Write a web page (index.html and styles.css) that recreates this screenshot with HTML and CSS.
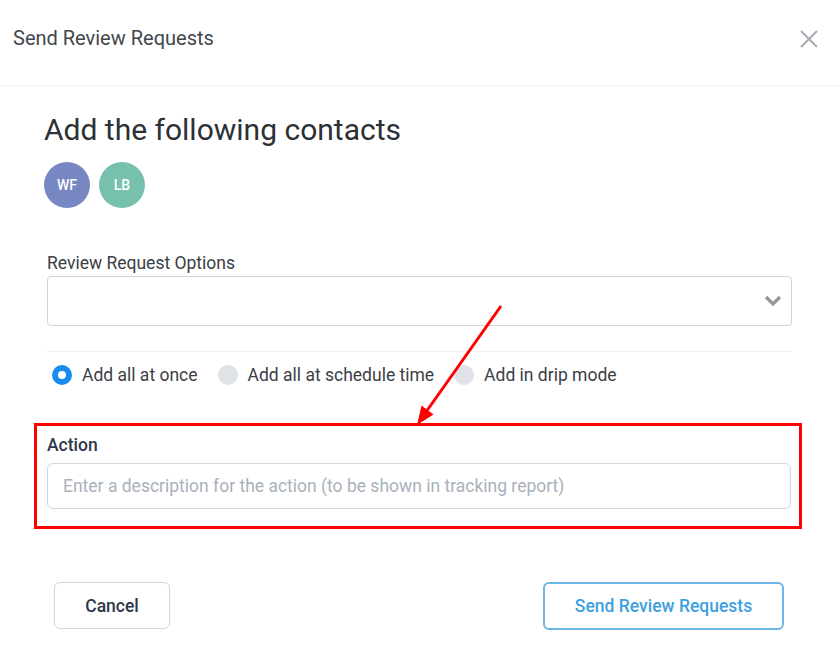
FILE: index.html
```html
<!DOCTYPE html>
<html lang="en">
  <head>
    <meta charset="UTF-8" />
    <meta name="viewport" content="width=device-width, initial-scale=1.0" />
    <title>Send Review Requests</title>
    <link rel="stylesheet" href="styles.css">
  </head>
  <body>
    <div class="modal">
      <div class="header">
        <p class="headerTitle">Send Review Requests</p>
        <button type="button" class="close" aria-label="Close">
          <svg width="18" height="18" viewBox="0 0 18 18">
            <path d="M1 1 L17 17 M17 1 L1 17" stroke="#a7adb2" stroke-width="2" fill="none" />
          </svg>
        </button>
      </div>
      <div class="content">
        <h1 class="heading">Add the following contacts</h1>
        <div class="avatars">
          <div class="avatar wf">WF</div>
          <div class="avatar lb">LB</div>
        </div>
        <label class="fieldLabel">Review Request Options</label>
        <div class="select">
          <svg class="chevron" width="18" height="12" viewBox="0 0 18 12">
            <path d="M2 2 L9 9 L16 2" stroke="#979797" stroke-width="3.2" fill="none" />
          </svg>
        </div>
        <div class="divider"></div>
        <div class="radios">
          <div class="radio"><span class="dot checked"></span>Add all at once</div>
          <div class="radio"><span class="dot"></span>Add all at schedule time</div>
          <div class="radio"><span class="dot"></span>Add in drip mode</div>
        </div>
        <div class="highlight">
          <label class="actionLabel">Action</label>
          <input class="actionInput" type="text" placeholder="Enter a description for the action (to be shown in tracking report)" />
        </div>
        <div class="footer">
          <button type="button" class="cancel">Cancel</button>
          <button type="button" class="send">Send Review Requests</button>
        </div>
      </div>
      <svg class="arrow" width="839" height="671" viewBox="0 0 839 671">
        <line x1="501" y1="306" x2="426" y2="412" stroke="#ff0000" stroke-width="3" />
        <polygon points="417,425 433.5,414.5 421.5,405.5" fill="#ff0000" />
      </svg>
    </div>
  </body>
</html>
```

FILE: styles.css
```css
body {
  margin: 0;
  font-family: Roboto, "Liberation Sans", sans-serif;
  color: #3a4046;
  background: #fff;
}
.modal {
  position: relative;
  width: 839px;
  height: 671px;
}
.header {
  height: 85px;
  border-bottom: 1px solid #eef3f7;
  display: flex;
  justify-content: space-between;
  align-items: flex-start;
  padding: 0 21px 0 13px;
}
.headerTitle {
  margin: 26px 0 0;
  font-size: 20px;
  line-height: 24px;
  color: #41474d;
}
.close {
  border: none;
  background: none;
  padding: 0;
  margin-top: 30px;
  cursor: pointer;
}
.content {
  padding: 0 47px;
}
.heading {
  margin: 27px 0 0 -3px;
  font-size: 30px;
  font-weight: 400;
  line-height: 34px;
  color: #2b3136;
}
.avatars {
  display: flex;
  gap: 9px;
  margin: 15px 0 0 -3px;
}
.avatar {
  width: 46px;
  height: 46px;
  border-radius: 50%;
  display: flex;
  justify-content: center;
  align-items: center;
  color: #fff;
  font-size: 14px;
  font-weight: 500;
}
.wf {
  background: #7787c1;
}
.lb {
  background: #77c0ad;
}
.fieldLabel {
  display: block;
  margin-top: 44px;
  font-size: 17.5px;
  line-height: 22px;
  color: #3a4046;
}
.select {
  margin-top: 2px;
  height: 48px;
  border: 1px solid #d0d4da;
  border-radius: 4px;
  display: flex;
  justify-content: flex-end;
  align-items: center;
  padding-right: 9px;
}
.divider {
  margin-top: 25px;
  height: 1px;
  background: #eef0f2;
}
.radios {
  display: flex;
  align-items: center;
  margin-top: 12px;
  padding-left: 5px;
  height: 22px;
}
.radio {
  display: flex;
  align-items: center;
  font-size: 17.5px;
  color: #3a4046;
  margin-right: 20px;
}
.dot {
  width: 20px;
  height: 20px;
  border-radius: 50%;
  background: #dfe2e7;
  margin-right: 10px;
  box-sizing: border-box;
}
.dot.checked {
  background: #fff;
  border: 6px solid #1a8cf0;
}
.highlight {
  margin: 37px -10px 0 -13px;
  border: 3px solid #ff0000;
  padding: 8px 8px 17px 10px;
}
.actionLabel {
  display: block;
  font-size: 17.5px;
  font-weight: 500;
  line-height: 22px;
  color: #2d3748;
}
.actionInput {
  display: block;
  width: 100%;
  box-sizing: border-box;
  margin-top: 7px;
  height: 46px;
  border: 1px solid #d3d6de;
  border-radius: 6px;
  padding: 0 15px;
  font-family: Roboto, "Liberation Sans", sans-serif;
  font-size: 17.5px;
  outline: none;
}
.actionInput::placeholder {
  color: #a9b1bb;
}
.footer {
  display: flex;
  justify-content: space-between;
  margin-top: 53px;
  padding: 0 8px 0 7px;
}
.cancel {
  width: 116px;
  height: 47px;
  border: 1px solid #cfd6df;
  border-radius: 6px;
  background: #fff;
  font-family: Roboto, "Liberation Sans", sans-serif;
  font-size: 17.5px;
  font-weight: 500;
  color: #2d3748;
  cursor: pointer;
}
.send {
  width: 241px;
  height: 48px;
  border: 2px solid #6cb6e6;
  border-radius: 6px;
  background: #fff;
  font-family: Roboto, "Liberation Sans", sans-serif;
  font-size: 17.5px;
  font-weight: 500;
  color: #3d9fe0;
  cursor: pointer;
}
.arrow {
  position: absolute;
  top: 0;
  left: 0;
  pointer-events: none;
}
```
